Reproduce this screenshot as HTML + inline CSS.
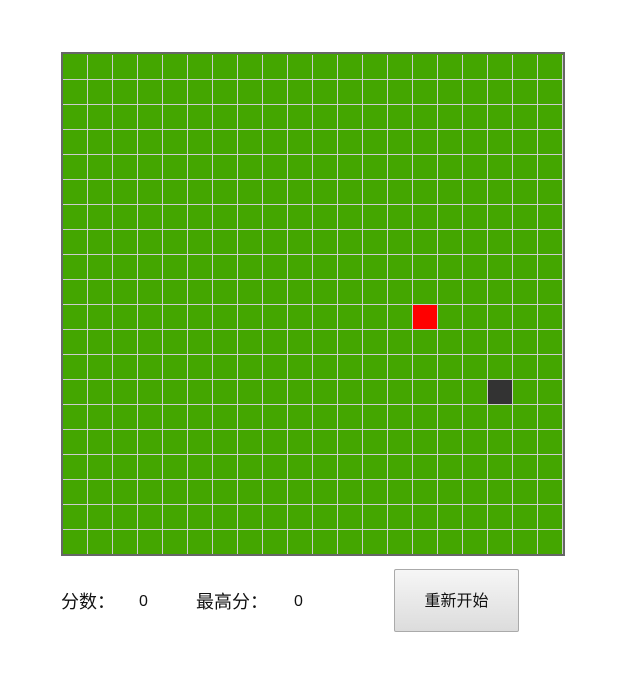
<!DOCTYPE html>
<html><head><meta charset="utf-8"><style>
body{margin:0;background:#fff;width:641px;height:689px;position:relative;font-family:"Liberation Sans","Noto Sans CJK SC",sans-serif;}
#o{position:absolute;left:61px;top:52px;width:500px;height:500px;border:2px solid #666;overflow:hidden;background:#44a600}
#b{position:absolute;left:0;top:1px;display:grid;grid-template-columns:repeat(20,25px);grid-template-rows:repeat(20,25px);}
#b div{background:#44a600;border-right:1px solid #ccc;border-bottom:1px solid #ccc;}
#b div.r{background:#ff0000}
#b div.d{background:#333}
.t{position:absolute;top:591px;font-size:18px;color:#111;line-height:22px}
button{position:absolute;left:394px;top:569px;width:125px;height:63px;border:1px solid #aaa;border-radius:2px;background:linear-gradient(#f6f6f6,#dcdcdc);font-family:"Liberation Sans","Noto Sans CJK SC",sans-serif;font-size:16px;color:#111;padding:0 0 4px 0}
</style></head><body>
<div id="o"><div id="b"></div></div>
<div class="t" style="left:61px">分数：</div>
<div class="t" style="left:139px;font-size:16px">0</div>
<div class="t" style="left:196px">最高分：</div>
<div class="t" style="left:294px;font-size:16px">0</div>
<button>重新开始</button>
<script>
var b=document.getElementById('b');
for(var r=0;r<20;r++)for(var c=0;c<20;c++){var d=document.createElement('div');if(r==10&&c==14)d.className='r';if(r==13&&c==17)d.className='d';b.appendChild(d);}
</script>
</body></html>
